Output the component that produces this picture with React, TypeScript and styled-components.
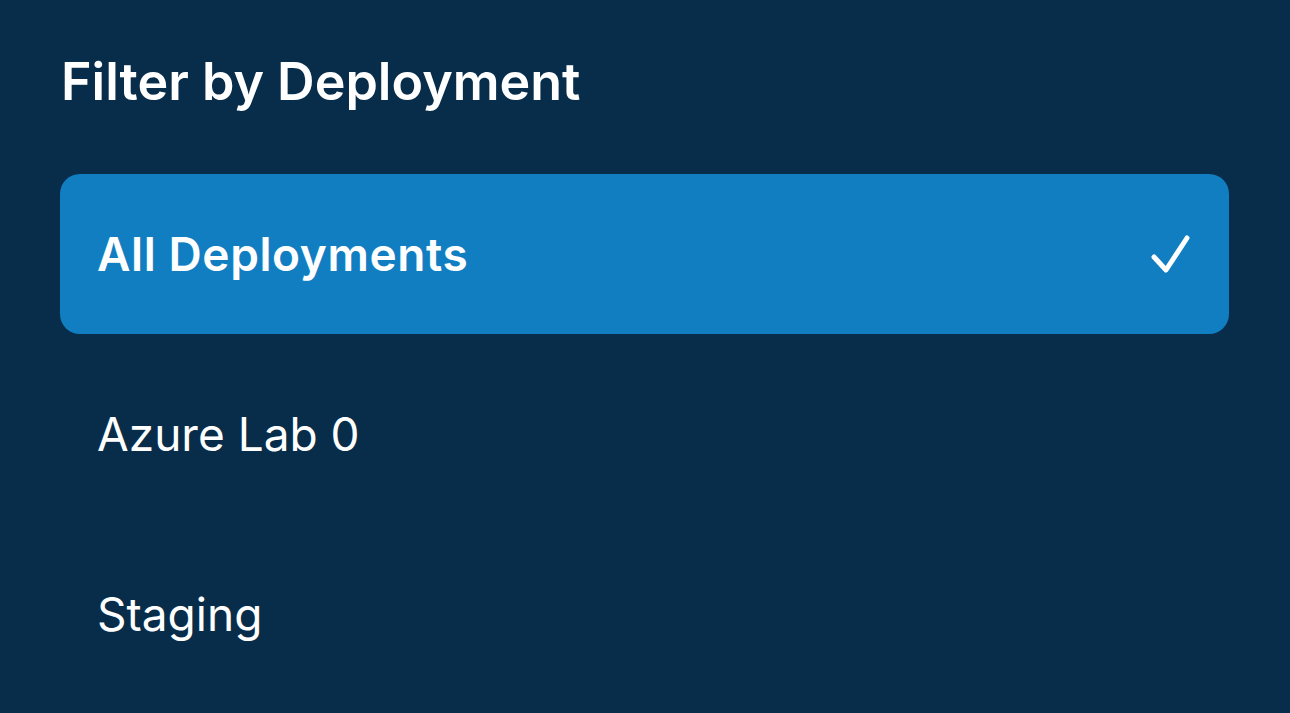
import React from 'react'
import styled, { createGlobalStyle } from 'styled-components'

const GlobalStyle = createGlobalStyle`
  html, body {
    margin: 0;
    padding: 0;
    background: #072d4a;
  }
  body {
    font-family: Inter, "Noto Sans", sans-serif;
    color: #ffffff;
    -webkit-font-smoothing: antialiased;
  }
`

const Page = styled.div`
  width: 1290px;
  height: 713px;
  box-sizing: border-box;
  padding: 50px 61px 0 60px;
  display: flex;
  flex-direction: column;
  overflow: hidden;
`

const Title = styled.h1`
  margin: 0 0 0 1px;
  font-size: 52px;
  line-height: 64px;
  font-weight: 600;
`

const List = styled.ul`
  list-style: none;
  margin: 60px 0 0;
  padding: 0;
  display: flex;
  flex-direction: column;
  gap: 20px;
`

const Row = styled.li<{ $selected?: boolean }>`
  height: 160px;
  box-sizing: border-box;
  padding: 0 37px 0 37px;
  border-radius: 20px;
  background: ${p => (p.$selected ? '#127ec2' : 'transparent')};
  display: flex;
  align-items: center;
  justify-content: space-between;
`

const Label = styled.span<{ $selected?: boolean }>`
  font-size: 46px;
  font-weight: ${p => (p.$selected ? 600 : 400)};
  letter-spacing: ${p => (p.$selected ? '0.6px' : '0')};
`

const Check = () => (
  <svg width="42" height="42" viewBox="0 0 42 42" fill="none">
    <path
      d="M4 24 L16 37 L37 5"
      stroke="#ffffff"
      strokeWidth="5"
      strokeLinecap="round"
      strokeLinejoin="round"
    />
  </svg>
)

const options = ['All Deployments', 'Azure Lab 0', 'Staging']

const App = () => {
  const selected = 'All Deployments'
  return (
    <>
      <GlobalStyle />
      <Page>
        <Title>Filter by Deployment</Title>
        <List>
          {options.map(o => (
            <Row key={o} $selected={o === selected}>
              <Label $selected={o === selected}>{o}</Label>
              {o === selected && <Check />}
            </Row>
          ))}
        </List>
      </Page>
    </>
  )
}

export default App
